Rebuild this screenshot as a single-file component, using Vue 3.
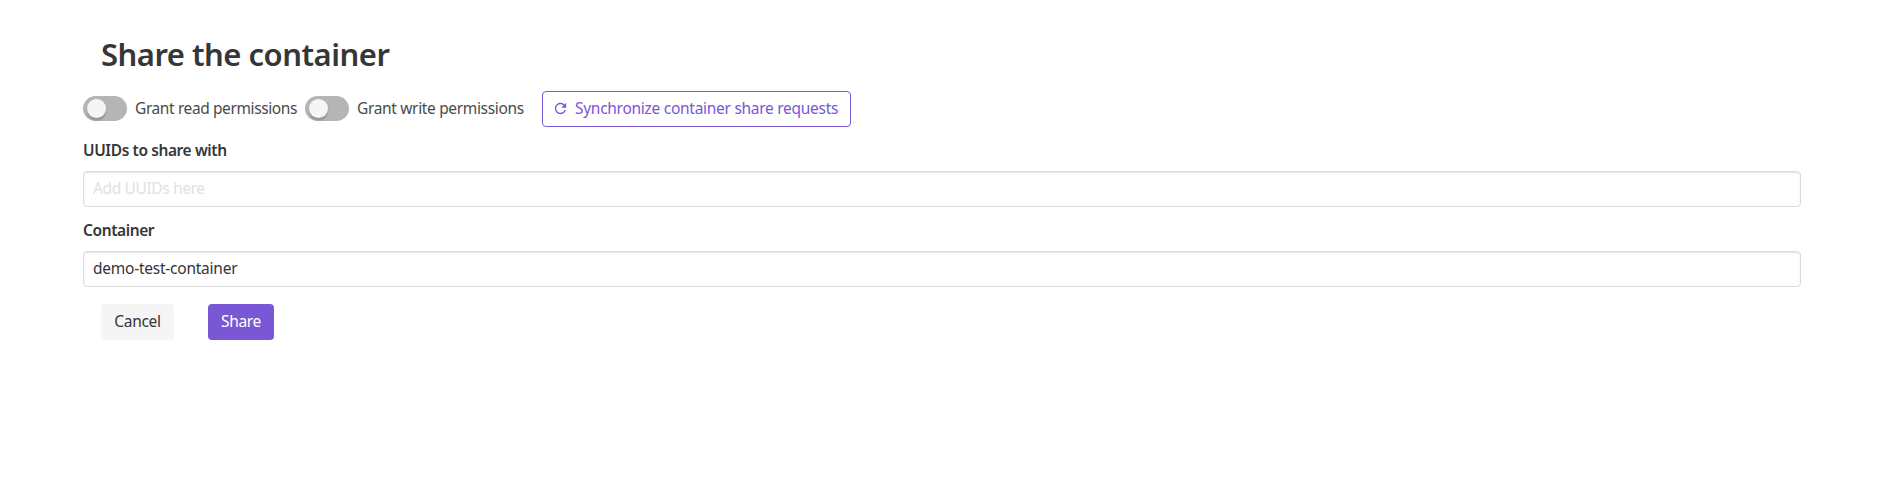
<script setup>
import { ref } from 'vue'

const read = ref(false)
const write = ref(false)
const uuids = ref('')
const container = ref('demo-test-container')
</script>

<template>
  <main class="page">
    <h1 class="title">Share the container</h1>
    <div class="toolbar">
      <label class="switch read">
        <input v-model="read" type="checkbox" />
        <span class="check"></span>
        <span class="text">Grant read permissions</span>
      </label>
      <label class="switch write">
        <input v-model="write" type="checkbox" />
        <span class="check"></span>
        <span class="text">Grant write permissions</span>
      </label>
      <button class="button outlined">
        <svg class="icon" viewBox="0 0 24 24" aria-hidden="true">
          <path d="M17.65 6.35C16.2 4.9 14.21 4 12 4a8 8 0 1 0 7.73 10h-2.08A6 6 0 1 1 12 6c1.66 0 3.14.69 4.22 1.78L13 11h7V4z" />
        </svg>
        <span class="text">Synchronize container share requests</span>
      </button>
    </div>
    <div class="field">
      <label class="label" for="uuids">UUIDs to share with</label>
      <input id="uuids" v-model="uuids" class="input" placeholder="Add UUIDs here" />
    </div>
    <div class="field">
      <label class="label" for="container">Container</label>
      <input id="container" v-model="container" class="input named" />
    </div>
    <div class="actions">
      <button class="button cancel"><span class="text">Cancel</span></button>
      <button class="button share"><span class="text">Share</span></button>
    </div>
  </main>
</template>

<style>
body {
  background: #fff;
}
</style>

<style scoped>
.page {
  box-sizing: border-box;
  height: 482px;
  padding: 36px 80px 0 83px;
  font-family: "Noto Sans", sans-serif;
  font-size: 15.5px;
  line-height: 24px;
  letter-spacing: -0.3px;
  color: #4a4a4a;
  overflow: hidden;
}
.title {
  margin: 0 0 19px 18px;
  font-size: 31px;
  line-height: 36px;
  font-weight: 600;
  letter-spacing: -0.5px;
  color: #363636;
  white-space: nowrap;
}
.toolbar {
  display: flex;
  align-items: flex-start;
  height: 36px;
}
.switch {
  display: flex;
  align-items: center;
  flex: none;
  height: 35px;
  white-space: nowrap;
}
.switch.read {
  width: 222px;
  letter-spacing: -0.4px;
}
.switch.write {
  width: 237px;
  letter-spacing: -0.34px;
}
.switch input {
  position: absolute;
  opacity: 0;
}
.text {
  padding-bottom: 2px;
}
.check {
  box-sizing: border-box;
  flex: none;
  width: 44px;
  height: 25px;
  padding: 3px 3px 3px 3.5px;
  margin-right: 8px;
  border-radius: 16px;
  background: #b5b5b5;
}
.check::before {
  content: "";
  display: block;
  width: 19.6px;
  height: 19.2px;
  border-radius: 50%;
  background: #f5f5f5;
  box-shadow: 0 3px 1px 0 rgba(0, 0, 0, 0.05), 0 2px 2px 0 rgba(0, 0, 0, 0.1), 0 3px 3px 0 rgba(0, 0, 0, 0.05);
}
.button {
  box-sizing: border-box;
  display: flex;
  align-items: center;
  justify-content: center;
  height: 36px;
  padding: 0;
  border: 1px solid transparent;
  border-radius: 4px;
  font: inherit;
  letter-spacing: inherit;
  white-space: nowrap;
}
.outlined {
  justify-content: flex-start;
  width: 309px;
  padding-left: 9px;
  border-color: #7957d5;
  background: transparent;
  color: #7957d5;
  letter-spacing: -0.28px;
}
.icon {
  flex: none;
  width: 17px;
  height: 17px;
  margin: 0 6px 2px 0;
  fill: currentColor;
}
.field {
  display: flex;
  flex-direction: column;
  margin-top: 11px;
}
.label {
  height: 24px;
  margin-bottom: 9px;
  color: #363636;
  font-weight: 600;
  letter-spacing: -0.4px;
}
.input {
  box-sizing: border-box;
  width: 100%;
  height: 36px;
  padding: 0 9px 2px;
  border: 1px solid #dbdbdb;
  border-radius: 4px;
  outline: none;
  background: #fff;
  box-shadow: inset 0 1px 2px rgba(10, 10, 10, 0.1);
  color: #363636;
  font: inherit;
  letter-spacing: -0.37px;
}
.named {
  letter-spacing: -0.24px;
}
.field + .field {
  margin-top: 11px;
}
.input::placeholder {
  color: #e1e1e1;
  opacity: 1;
}
.actions {
  display: flex;
  gap: 34px;
  margin: 17px 0 0 18px;
}
.cancel {
  width: 73px;
  background: #f5f5f5;
  color: #363636;
}
.share {
  width: 66px;
  background: #7957d5;
  color: #fff;
}
</style>
